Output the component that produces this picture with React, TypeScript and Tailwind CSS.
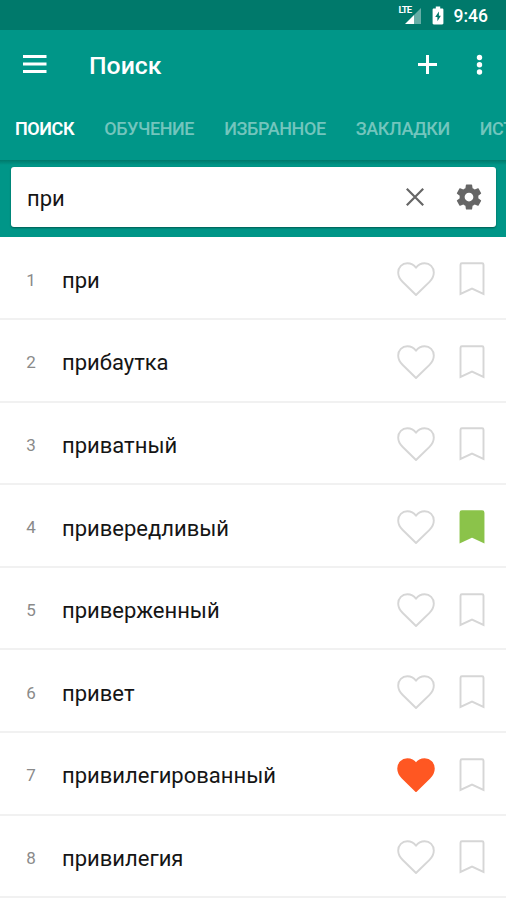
import { useState } from "react";

type Word = {
  id: number;
  text: string;
  favorite?: boolean;
  bookmarked?: boolean;
};

const tabs = ["ПОИСК", "ОБУЧЕНИЕ", "ИЗБРАННОЕ", "ЗАКЛАДКИ", "ИСТОРИЯ"];

const initialWords: Word[] = [
  { id: 1, text: "при" },
  { id: 2, text: "прибаутка" },
  { id: 3, text: "приватный" },
  { id: 4, text: "привередливый", bookmarked: true },
  { id: 5, text: "приверженный" },
  { id: 6, text: "привет" },
  { id: 7, text: "привилегированный", favorite: true },
  { id: 8, text: "привилегия" },
];

function StatusBar() {
  return (
    <div className="flex h-[30px] shrink-0 items-center justify-end bg-[#00796b] pr-[18px] text-white">
      <div className="relative mr-[10px] h-5 w-6">
        <span className="absolute top-0 left-px text-[9.5px] leading-[10px] font-bold tracking-[-0.9px]">LTE</span>
        <svg width="24" height="20" viewBox="0 0 24 20">
          <path d="M23 3v16h-7V10z" fill="currentColor" fillOpacity="0.4" />
          <path d="M16 10v9H7z" fill="currentColor" />
        </svg>
      </div>
      <svg width="12" height="19" viewBox="0 0 12 19" className="mr-[10px]">
        <path d="M3.8.5h4.4v1.9h2c.7 0 1.2.5 1.2 1.2v13.6c0 .7-.5 1.2-1.2 1.2H1.8c-.7 0-1.2-.5-1.2-1.2V3.6c0-.7.5-1.2 1.2-1.2h2z" fill="currentColor" />
        <path d="M6.9 5.5 3.2 11h2.2v4.2L8.9 9.7h-2z" fill="#00796b" />
      </svg>
      <span className="pt-[3px] text-[17.5px] leading-none font-medium">9:46</span>
    </div>
  );
}

function Toolbar() {
  return (
    <div className="flex h-[70px] shrink-0 items-center text-white">
      <button className="ml-[23px] pb-[2px]">
        <svg width="24" height="18" viewBox="0 0 24 18" fill="currentColor">
          <path d="M0 0h23.5v3H0zM0 7.5h23.5v3H0zM0 15h23.5v3H0z" />
        </svg>
      </button>
      <h1 className="ml-[42px] flex-1 pt-[2px] text-[24.8px] leading-none font-medium">Поиск</h1>
      <button className="mr-[39px] pb-[2px]">
        <svg width="19" height="19" viewBox="0 0 19 19" fill="currentColor">
          <path d="M8 0h3v8h8v3h-8v8H8v-8H0V8h8z" />
        </svg>
      </button>
      <button className="mr-[23px]">
        <svg width="7" height="22" viewBox="0 0 7 22" fill="currentColor">
          <circle cx="3.5" cy="3.5" r="2.7" />
          <circle cx="3.5" cy="10.8" r="2.7" />
          <circle cx="3.5" cy="18" r="2.7" />
        </svg>
      </button>
    </div>
  );
}

function Heart({ active }: { active?: boolean }) {
  return (
    <svg
      width="40"
      height="36"
      viewBox="0 0 40 36"
      fill={active ? "#ff5722" : "none"}
      stroke={active ? "#ff5722" : "#d6d6d6"}
      strokeWidth="1.9"
      strokeLinejoin="round"
    >
      <path d="M20 34 6.5 20.8C3.5 17.8 2.2 15.3 2.2 11.5 2.2 6.3 6.2 2.3 11.3 2.3c3.4 0 6.6 1.5 8.7 4.4 2.1-2.9 5.3-4.4 8.7-4.4 5.1 0 9.1 4 9.1 9.2 0 3.8-1.3 6.3-4.3 9.3z" />
    </svg>
  );
}

function Bookmark({ active }: { active?: boolean }) {
  return (
    <svg
      width="28"
      height="36"
      viewBox="0 0 28 36"
      fill={active ? "#8bc34a" : "none"}
      stroke={active ? "#8bc34a" : "#d6d6d6"}
      strokeWidth="1.9"
    >
      <path d="M3.9 2.3h20.2c.8 0 1.4.6 1.4 1.4v29.2L14 27.6 2.5 32.9V3.7c0-.8.6-1.4 1.4-1.4z" />
    </svg>
  );
}

export default function App() {
  const [activeTab, setActiveTab] = useState("ПОИСК");
  const [query, setQuery] = useState("при");
  const [words, setWords] = useState<Word[]>(initialWords);

  const toggle = (id: number, key: "favorite" | "bookmarked") => {
    setWords(words.map((w) => (w.id === id ? { ...w, [key]: !w[key] } : w)));
  };

  return (
    <div className="flex h-[900px] w-[506px] flex-col overflow-hidden bg-white font-['Roboto',sans-serif]">
      <StatusBar />

      {/* Header */}
      <header className="flex h-[130px] shrink-0 flex-col bg-[#009688]">
        <Toolbar />
        <nav className="flex h-[58px] items-center gap-[30px] overflow-hidden pl-[15px]">
          {tabs.map((tab) => (
            <button
              key={tab}
              onClick={() => setActiveTab(tab)}
              className={`shrink-0 text-[18px] leading-none tracking-[-0.4px] ${
                tab === activeTab ? "font-semibold text-white" : "font-medium text-[#73c5bd]"
              }`}
            >
              {tab}
            </button>
          ))}
        </nav>
      </header>

      {/* Search */}
      <div className="h-[77px] shrink-0 bg-[#009688] bg-linear-to-b from-[#00796b] to-[#009688] to-[5px] pt-[7px] pr-[10px] pl-[11px]">
        <div className="flex h-[60px] items-center rounded-[3px] bg-white pr-[12px] pl-4 shadow-[0_1px_2px_rgba(0,0,0,0.4)]">
          <input
            value={query}
            onChange={(e) => setQuery(e.target.value)}
            className="min-w-0 flex-1 pt-[2px] text-[22px] text-[#151515] outline-none"
          />
          <button onClick={() => setQuery("")} className="mr-[29px]">
            <svg width="20" height="20" viewBox="0 0 20 20" stroke="#666" strokeWidth="2.2">
              <path d="m1.8 1.8 16.4 16.4M18.2 1.8 1.8 18.2" />
            </svg>
          </button>
          <button>
            <svg width="30" height="30" viewBox="0 0 24 24" fill="#666">
              <path d="M19.43 12.98c.04-.32.07-.64.07-.98s-.03-.66-.07-.98l2.11-1.65c.19-.15.24-.42.12-.64l-2-3.46c-.12-.22-.39-.3-.61-.22l-2.49 1c-.52-.4-1.08-.73-1.69-.98l-.38-2.65C14.46 2.18 14.25 2 14 2h-4c-.25 0-.46.18-.49.42l-.38 2.65c-.61.25-1.17.59-1.69.98l-2.49-1c-.23-.09-.49 0-.61.22l-2 3.46c-.13.22-.07.49.12.64l2.11 1.65c-.04.32-.07.65-.07.98s.03.66.07.98l-2.11 1.65c-.19.15-.24.42-.12.64l2 3.46c.12.22.39.3.61.22l2.49-1c.52.4 1.08.73 1.69.98l.38 2.65c.03.24.24.42.49.42h4c.25 0 .46-.18.49-.42l.38-2.65c.61-.25 1.17-.59 1.69-.98l2.49 1c.23.09.49 0 .61-.22l2-3.46c.12-.22.07-.49-.12-.64l-2.11-1.65zM12 15.5c-1.93 0-3.5-1.57-3.5-3.5s1.57-3.5 3.5-3.5 3.5 1.57 3.5 3.5-1.57 3.5-3.5 3.5z" />
            </svg>
          </button>
        </div>
      </div>

      {/* Words */}
      <ul className="pt-[0.5px]">
        {words.map((word) => (
          <li key={word.id} className="flex h-[82.6px] items-center border-b-2 border-[#f1f1f1] pt-[3px] pr-[20px]">
            <span className="w-[62px] pt-[2px] text-center text-[17px] text-[#8a8a8a]">{word.id}</span>
            <span className="flex-1 pt-[2px] text-[22px] text-[#151515]">{word.text}</span>
            <button onClick={() => toggle(word.id, "favorite")} className="mr-[22.5px]">
              <Heart active={word.favorite} />
            </button>
            <button onClick={() => toggle(word.id, "bookmarked")}>
              <Bookmark active={word.bookmarked} />
            </button>
          </li>
        ))}
      </ul>
    </div>
  );
}
